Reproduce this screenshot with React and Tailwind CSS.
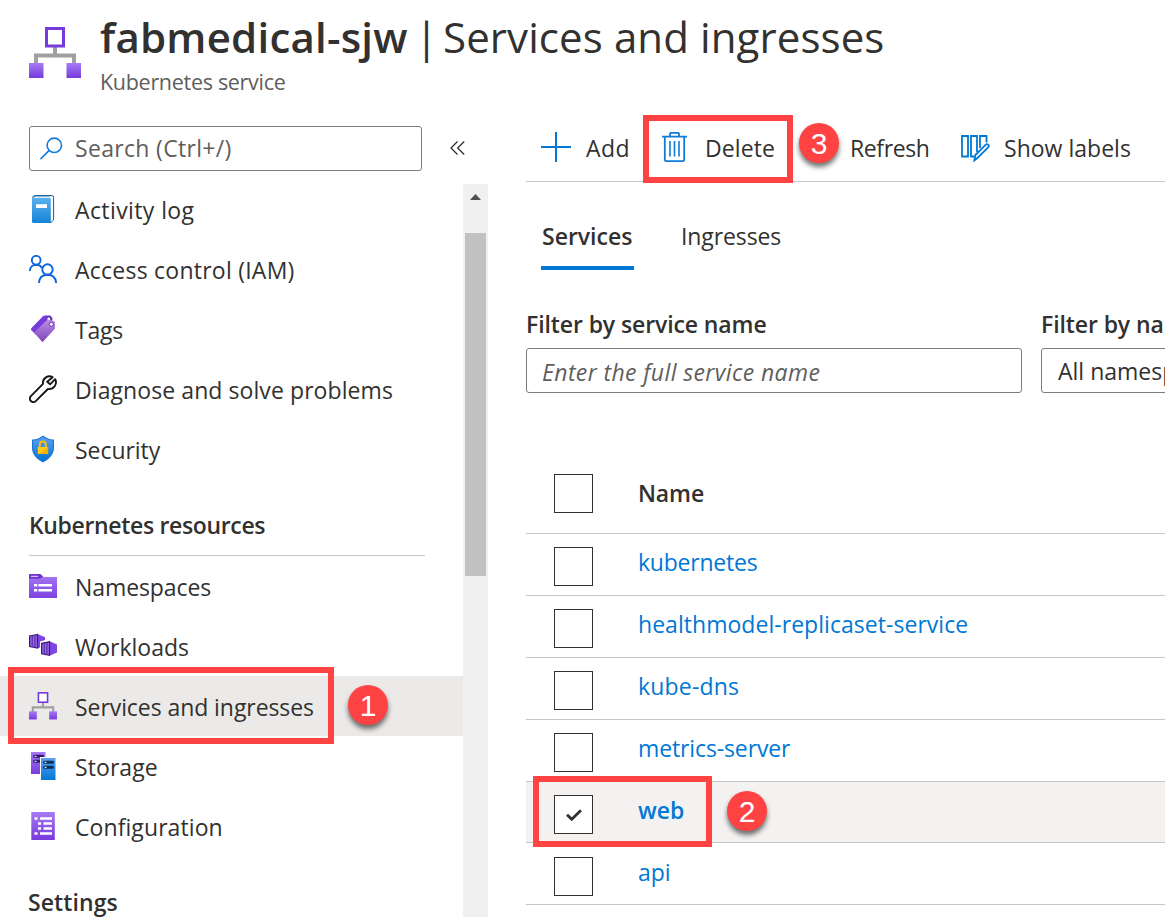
const Grad = ({ id, from, to }) => (
  <linearGradient id={id} x1="0" y1="0" x2="0" y2="1">
    <stop offset="0" stopColor={from} />
    <stop offset="1" stopColor={to} />
  </linearGradient>
);

function NetworkIcon({ className, id }) {
  return (
    <svg className={className} viewBox="0 0 52 51" fill="none">
      <defs><Grad id={id} from="#a67af4" to="#773adc" /></defs>
      <path d="M26 20v9M7 37v-8.500h38V37" stroke="#a0a0a0" strokeWidth="4" />
      <rect x="17.500" y="1.500" width="17" height="17.500" fill="#fff" stroke="#773adc" strokeWidth="3" />
      <rect x="0" y="36" width="14.500" height="15" fill={`url(#${id})`} />
      <rect x="37.500" y="36" width="14.500" height="15" fill={`url(#${id})`} />
    </svg>
  );
}

const box = { viewBox: "0 0 28 28", className: "size-7", fill: "none" };

const ActivityIcon = () => (
  <svg {...box}>
    <defs><Grad id="act" from="#5ab0f0" to="#1583d6" /></defs>
    <path d="M5.500.6H23q1.600 0 1.600 1.600V25L22 27.400H5Z" fill="#fff" stroke="#0f5c9c" strokeWidth="1" />
    <path d="M3 4.500Q3 .5 6 .5h16L20.500 2.500H5Z" fill="#1566a8" />
    <path d="M4 2.800 5.800 1.500H22l-1 1.300Z" fill="#fff" />
    <path d="M3 4Q3 3 4 3h16.500q1.300 0 1.300 1.300V28H4.500Q3 28 3 26.500Z" fill="url(#act)" />
    <rect x="7" y="9.200" width="11" height="3.800" fill="#fff" />
  </svg>
);

const PeopleIcon = () => (
  <svg {...box} stroke="#0a63e0" strokeWidth="1.900">
    <circle cx="7.200" cy="5.300" r="4.400" />
    <circle cx="18.500" cy="14.500" r="5.200" />
    <path d="M.9 16c0-3.700 2.600-6.200 6.300-6.200 2.500 0 4.600 1 5.600 3M9.900 28c.4-5 3.600-8.200 8.600-8.200s8.200 3.200 8.600 8.200" />
  </svg>
);

const TagIcon = () => (
  <svg {...box}>
    <defs><Grad id="tag" from="#bd8ee4" to="#7c45b9" /></defs>
    <path d="M2 13.500 14 1.300q.8-.8 2-.8h5.500L23.500 3 23 10 7 20 2 14.800Z" fill="#773adc" />
    <circle cx="19.800" cy="4" r="2.100" fill="#fff" stroke="#45258a" />
    <path d="m5 17.500 13.600-13 6.200 1.500q1.200.4 1.200 1.500v6L13.500 27.200Z" fill="url(#tag)" />
    <circle cx="22.300" cy="9.300" r="2" fill="#fff" stroke="#6333b5" />
  </svg>
);

const WrenchIcon = () => (
  <svg {...box} stroke="#161616" strokeWidth="1.900" strokeLinejoin="round">
    <path d="M23.700 2.300c-4.300-2.700-10.500.7-9.700 6.600L1.900 21.200c-3.100 3.300 1.400 7.800 4.800 4.900L18.900 14c5.800.8 9.800-5 7.300-9.800l-5.100 5.100-2.900-2.600Z" />
  </svg>
);

const ShieldIcon = () => (
  <svg {...box}>
    <defs><Grad id="shd" from="#5ea0ef" to="#0572cf" /></defs>
    <path d="M3 4.500c5 0 7-1.200 11-4 4 2.800 6 4 11 4V13c0 7-5.500 11.500-11 14.500C8.500 24.500 3 20 3 13Z" fill="#1a78d6" />
    <path d="M4.200 5.500c4.300-.1 6.500-1.300 9.800-3.500 3.300 2.200 5.500 3.400 9.800 3.500V13c0 6-4.500 10-9.800 13C8.700 23 4.200 19 4.200 13Z" fill="url(#shd)" />
    <path d="M10.800 13V9.500c0-4 6-4 6 0V13" stroke="#ffbf00" strokeWidth="1.900" />
    <rect x="8.800" y="12" width="10.300" height="7" rx=".6" fill="#ffca1a" />
    <path d="M19.100 12v6.500q0 .5-.6.500H10Z" fill="#f5b300" />
  </svg>
);

const FolderIcon = () => (
  <svg {...box}>
    <defs><Grad id="fld" from="#a67af4" to="#7d43df" /></defs>
    <path d="M0 3q0-1 1-1h9.500q1 0 1.600.7L14.500 5H28v21H0Z" fill="url(#fld)" />
    <path d="M0 3q0-1 1-1h9.500q1 0 1.600.7l1.800 1.600-1.800 1.700q-.6.700-1.600.7H0Z" fill="#6d33d0" />
    <path d="M2 4.400h7" stroke="#d5bdfa" strokeWidth="1.200" />
    <path d="M5 13.300h3.300M5 18.300h3.300M9.500 13.300H23M9.500 18.300H23" stroke="#fff" strokeWidth="2.500" />
  </svg>
);

const Crate = ({ x, y }) => (
  <g transform={`translate(${x} ${y})`}>
    <path d="m8.500 0 7.500 3.300v8L8.500 14.500Z" fill="#7f45e0" />
    <path d="M.6 2 8.500.5V14L.6 12.500Z" fill="#9a66ec" stroke="#3b1a78" strokeWidth="1.200" />
    <path d="M3.200 2v10.500M5.900 1.500V13" stroke="#4b2496" strokeWidth="1" />
  </g>
);

const WorkloadIcon = () => (
  <svg {...box}>
    <Crate x="0" y="2" />
    <path d="M11 9.500 20 7l8 3.500v12L20 25l-9-3.500Z" fill="#fff" />
    <Crate x="12" y="9.300" />
  </svg>
);

const Server = ({ x, y, fill, dark }) => (
  <g transform={`translate(${x} ${y})`}>
    <rect width="14.500" height="22" fill={fill} />
    <rect x="2" y="2.800" width="11" height="3" rx="1.500" fill={dark} />
    <rect x="2" y="7.800" width="11" height="3" rx="1.500" fill={dark} />
    <path d="M3.500 4.300h2M3.500 9.300h2" stroke="#bfe1ff" strokeWidth="1.300" />
  </g>
);

const StorageIcon = () => (
  <svg {...box}>
    <defs><Grad id="st1" from="#a67af4" to="#773adc" /><Grad id="st2" from="#5ea0ef" to="#0078d4" /></defs>
    <Server x="2" y="0" fill="url(#st1)" dark="#341a6e" />
    <path d="M11 5h16v23H11Z" fill="#fff" />
    <Server x="12" y="6" fill="url(#st2)" dark="#0c2f5c" />
  </svg>
);

const ConfigIcon = () => (
  <svg {...box}>
    <defs><Grad id="cfg" from="#a67af4" to="#773adc" /></defs>
    <rect x="2.300" width="23.500" height="28" fill="url(#cfg)" />
    <path d="M5.500 6.500h3M11 6.500h12M9 11.500h3M14.500 11.500H23M9 16.500h3M14.500 16.500H23M5.500 21.500h3M11 21.500h12" stroke="#fff" strokeWidth="2.600" />
  </svg>
);

const Badge = ({ n, className }) => (
  <div className={`absolute z-10 flex size-10 items-center justify-center rounded-full bg-[#ff4343] font-['Liberation_Sans',sans-serif] text-[30px] leading-none text-white shadow-[0_4px_5px_rgba(0,0,0,0.55)] ${className}`}>
    <span className="pt-[2px]">{n}</span>
  </div>
);

const Frame = ({ className }) => (
  <div className={`pointer-events-none absolute z-10 border-6 border-[#ff4343] ${className}`} />
);

function NavItem({ icon, label, track, active, children }) {
  return (
    <div className={`relative flex h-[60px] items-center gap-[18px] pl-[29px] ${active ? "bg-[#ebeae9]" : ""}`}>
      <span className="flex size-7 items-center justify-center">{icon}</span>
      <span className={`pt-[2px] ${track}`}>{label}</span>
      {children}
    </div>
  );
}

function CheckBox({ checked }) {
  return (
    <span className="flex size-[39px] shrink-0 items-center justify-center border border-[#323130] bg-white">
      {checked && (
        <svg viewBox="0 0 16 12" className="mt-px ml-px h-3 w-4" fill="none" stroke="#323130" strokeWidth="2.800">
          <path d="M1 5.800 5.700 10.300 15 1.300" />
        </svg>
      )}
    </span>
  );
}

const rows = [
  ["kubernetes", "tracking-[-0.22px]"],
  ["healthmodel-replicaset-service", "tracking-[0.04px]"],
  ["kube-dns", "tracking-[0.18px]"],
  ["metrics-server", "tracking-[-0.12px]"],
];

export default function App() {
  return (
    <div className="flex h-[917px] w-[1165px] flex-col overflow-hidden whitespace-nowrap bg-white font-['Open_Sans','Noto_Sans',sans-serif] text-[23px] leading-[30px] text-[#323130]">
      <header className="flex h-[115px] shrink-0 items-start gap-[19px] pl-[29px]">
        <NetworkIcon id="net-lg" className="mt-[27px] h-[51px] w-[52px]" />
        <div className="flex flex-col pt-[12px]">
          <h1 className="flex text-[42px] leading-[50px]">
            <span className="w-[315px] font-semibold tracking-[0.22px]">fabmedical-sjw</span>
            <span className="w-[28px]">|</span>
            <span className="tracking-[0.1px]">Services and ingresses</span>
          </h1>
          <p className="mt-[5px] text-[21.5px] tracking-[-0.3px] text-[#605e5c]">Kubernetes service</p>
        </div>
      </header>

      <div className="flex min-h-0 flex-1">
        <aside className="flex w-[488px] shrink-0 flex-col">
          <div className="flex h-[64px] shrink-0 items-start pl-[29px] pt-[11px]">
            <div className="flex h-[45px] w-[393px] items-center gap-[12px] rounded-[3px] border border-[#7f7d7b] pl-[10px]">
              <svg viewBox="0 0 23 23" className="size-[23px]" fill="none" stroke="#0f7bd6" strokeWidth="1.600">
                <circle cx="14.300" cy="8.300" r="7.200" />
                <path d="M9.200 13.400.4 22.200" />
              </svg>
              <span className="pb-[2px] tracking-[0.32px] text-[#605e5c]">Search (Ctrl+/)</span>
            </div>
            <svg viewBox="0 0 15 14" className="ml-[28px] mt-[15px] h-[14px] w-[15px]" fill="none" stroke="#323130" strokeWidth="1.300">
              <path d="M7.500.5 1 7l6.500 6.500M14.200.5 7.700 7l6.500 6.500" />
            </svg>
          </div>

          <div className="flex min-h-0 flex-1">
            <nav className="w-[463px] shrink-0">
              <NavItem icon={<ActivityIcon />} label="Activity log" track="tracking-[0.4px]" />
              <NavItem icon={<PeopleIcon />} label="Access control (IAM)" track="tracking-[0.24px]" />
              <NavItem icon={<TagIcon />} label="Tags" track="tracking-[-0.2px]" />
              <NavItem icon={<WrenchIcon />} label="Diagnose and solve problems" track="tracking-[0.08px]" />
              <NavItem icon={<ShieldIcon />} label="Security" track="tracking-[-0.05px]" />
              <div className="ml-[29px] mr-[38px] h-[77px] border-b border-[#c8c6c4] pt-[31px] font-semibold tracking-[-0.34px]">
                Kubernetes resources
              </div>
              <NavItem icon={<FolderIcon />} label="Namespaces" track="tracking-[-0.08px]" />
              <NavItem icon={<WorkloadIcon />} label="Workloads" track="tracking-[0px]" />
              <NavItem icon={<NetworkIcon id="net-sm" className="w-7" />} label="Services and ingresses" track="tracking-[-0.07px]" active>
                <Frame className="left-[8px] top-[-9px] h-[77px] w-[326px]" />
                <Badge n="1" className="left-[348px] top-[9px]" />
              </NavItem>
              <NavItem icon={<StorageIcon />} label="Storage" track="tracking-[0.08px]" />
              <NavItem icon={<ConfigIcon />} label="Configuration" track="tracking-[0.08px]" />
              <div className="ml-[28px] pt-[31px] font-semibold tracking-[0.1px]">Settings</div>
            </nav>
            <div className="mt-[5px] flex w-[25px] flex-col items-center bg-[#f0f0f0]">
              <svg viewBox="0 0 11 6" className="mt-[10px] h-[6px] w-[11px]">
                <path d="M5.500 0 11 6H0Z" fill="#505050" />
              </svg>
              <div className="mt-[33px] h-[343px] w-[21px] bg-[#c1c1c1]" />
            </div>
          </div>
        </aside>

        <main className="ml-[38px] flex min-w-0 flex-1 flex-col">
          <div className="relative flex h-[67px] shrink-0 items-center border-b border-[#c8c6c4]">
            <svg viewBox="0 0 30 30" className="relative -top-px ml-[15px] size-[30px]" fill="none" stroke="#0078d4" strokeWidth="2">
              <path d="M0 15h30M15 0v30" />
            </svg>
            <span className="ml-[15px] w-[76px] tracking-[0.4px]">Add</span>
            <svg viewBox="0 0 25 30" className="relative -top-px h-[30px] w-[25px]" fill="none" stroke="#0f7bd6" strokeWidth="1.800">
              <path d="M0 4.600h25M8 4.500V2q0-1.200 1.200-1.200h6.600Q17 .8 17 2v2.500M2.800 4.600v22.600q0 1.900 1.900 1.900h15.600q1.900 0 1.900-1.900V4.600" />
              <path d="M8 9v15.500M12.500 9v15.500M17 9v15.500" strokeWidth="1.600" />
            </svg>
            <span className="ml-[18px] w-[145px] tracking-[0.1px]">Delete</span>
            <span className="w-[111px] tracking-[-0.38px]">Refresh</span>
            <svg viewBox="0 0 29 27" className="h-[27px] w-[29px]" fill="none" stroke="#0078d4" strokeWidth="1.800">
              <path d="M1 1h6v20.500H1ZM16 17V1h-6v20.500h3M19 13V1h6.500v6.500" />
              <path d="m13.300 25.500 1-5.500L24.800 9.600q1.200-1 2.400.1 1.200 1.200.1 2.500L16.700 22.800Z" />
            </svg>
            <span className="ml-[14px] tracking-[0.02px]">Show labels</span>
            <Frame className="left-[117px] top-0 h-[68px] w-[150px]" />
            <Badge n="3" className="left-[273px] top-[8px]" />
          </div>

          <div className="mt-[39px] flex h-[49px] shrink-0 pl-[15px]">
            <div className="w-[93px] border-b-4 border-[#0078d4] pl-px font-semibold">Services</div>
            <div className="ml-[47px] tracking-[-0.1px]">Ingresses</div>
          </div>

          <div className="mt-[39px] flex shrink-0 gap-[19px]">
            <div className="w-[496px] shrink-0">
              <div className="font-semibold tracking-[-0.1px]">Filter by service name</div>
              <div className="mt-[9px] h-[45px] rounded-[3px] border border-[#7f7d7b] pl-[15px] pt-[8px] italic tracking-[0.38px] text-[#605e5c]">
                Enter the full service name
              </div>
            </div>
            <div className="w-[300px] shrink-0">
              <div className="font-semibold tracking-[-0.1px]">Filter by namespace</div>
              <div className="mt-[9px] h-[45px] rounded-[3px] border border-[#7f7d7b] pl-[16px] pt-[7px]">All namespaces</div>
            </div>
          </div>

          <div className="mt-[68px] shrink-0">
            <div className="flex h-[73px] items-start border-b border-[#c8c6c4] pl-[28px] pt-[13px]">
              <CheckBox />
              <span className="ml-[45px] mt-[4px] font-semibold tracking-[-0.14px]">Name</span>
            </div>
            {rows.map(([name, track]) => (
              <div key={name} className="flex h-[62px] items-start border-b border-[#c8c6c4] pl-[28px] pt-[13px]">
                <CheckBox />
                <span className={`ml-[45px] text-[#0078d4] ${track}`}>{name}</span>
              </div>
            ))}
            <div className="relative flex h-[61px] items-start border-b border-[#c8c6c4] bg-[#f3f2f1] pl-[28px] pt-[13px]">
              <CheckBox checked />
              <span className="ml-[45px] font-semibold text-[#0078d4]">web</span>
              <Frame className="left-[7px] top-[-6px] h-[71px] w-[179px]" />
              <Badge n="2" className="left-[201px] top-[9px]" />
            </div>
            <div className="flex h-[62px] items-start border-b border-[#c8c6c4] pl-[28px] pt-[14px]">
              <CheckBox />
              <span className="ml-[45px] text-[#0078d4]">api</span>
            </div>
          </div>
        </main>
      </div>
    </div>
  );
}
